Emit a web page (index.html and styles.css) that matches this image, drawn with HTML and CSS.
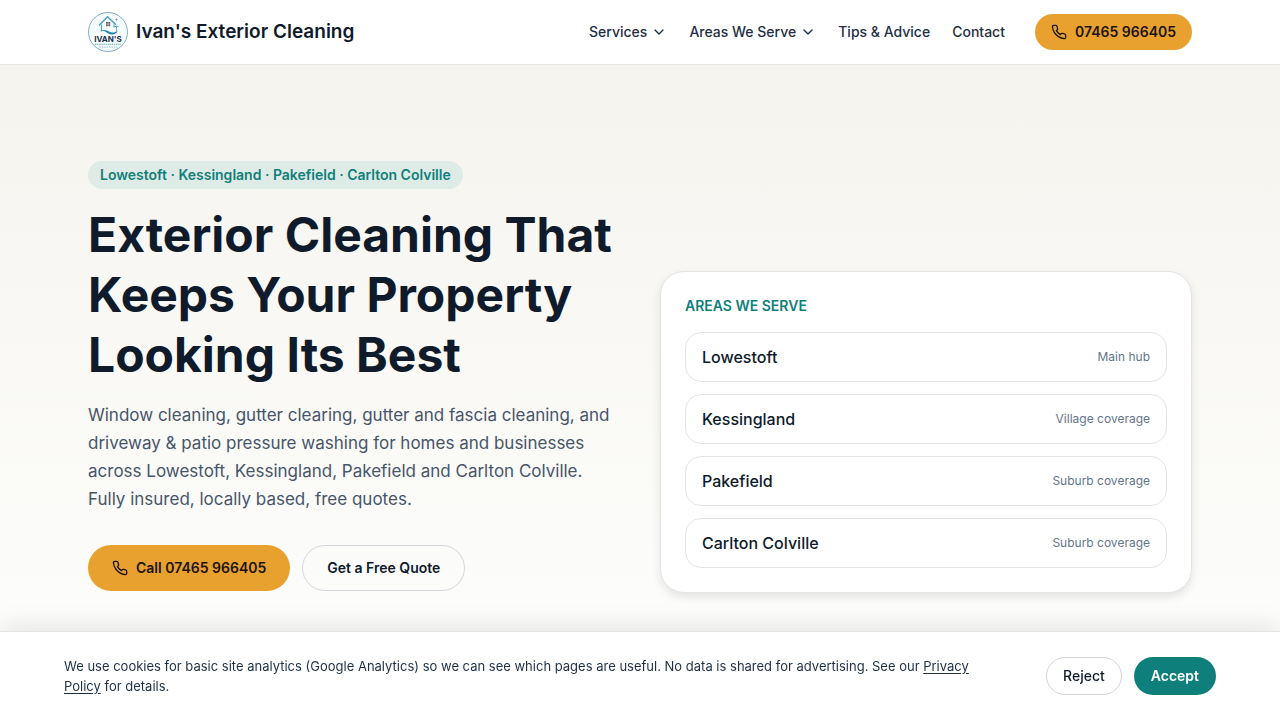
FILE: index.html
```html
<!DOCTYPE html>
<html lang="en-GB">
<head>
    <meta charset="UTF-8">
    <meta name="viewport" content="width=device-width, initial-scale=1.0">
    <title>Ivan's Exterior Cleaning</title>
    <link rel="stylesheet" href="styles.css">
</head>
<body>
    <header class="site-header">
        <div class="container header-inner">
            <a href="#" class="brand">
                <svg class="logo" viewBox="0 0 40 40" aria-hidden="true">
                    <circle cx="20" cy="20" r="19.5" fill="#f7fcfe" stroke="#5f9dbd" stroke-width=".8"/>
                    <path d="M11 13.500 19.500 4.800l8.500 8" fill="none" stroke="#4d9fc6" stroke-width="1.500"/>
                    <path d="M13.500 12.500v7M26 12.500v3" fill="none" stroke="#4d9fc6" stroke-width="1.100"/>
                    <path d="M18 10h4.200v4.200H18z" fill="#685f63"/>
                    <path d="M20.100 10v4.200M18 12.100h4.200" stroke="#d9edf5" stroke-width=".5"/>
                    <path d="M11.500 19c4-2 7-1 9.500.5s6 1.500 9-1c-1.500 4.500-7 5-10.500 2.500s-5-2.500-8-2z" fill="#2382b8"/>
                    <path d="M28.500 6.500v2M27.500 7.500h2M28.500 13.500v6M26.500 14.500h4" fill="none" stroke="#55a8c8" stroke-width=".9"/>
                    <text class="logo-name" x="20" y="30" text-anchor="middle">IVAN'S</text>
                    <path d="M7 32.300h26" stroke="#6eaeb9" stroke-width="1" stroke-dasharray="1.500 .6"/>
                    <path d="M11.500 35.200h18" stroke="#9ccbd8" stroke-width="1.200" stroke-dasharray="1.400 1"/>
                </svg>
                <span>Ivan's Exterior Cleaning</span>
            </a>
            <nav class="main-nav" aria-label="Main">
                <button type="button" class="nav-item">Services
                    <svg class="chevron" viewBox="0 0 24 24" aria-hidden="true"><path d="m6 9 6 6 6-6"/></svg>
                </button>
                <button type="button" class="nav-item">Areas We Serve
                    <svg class="chevron" viewBox="0 0 24 24" aria-hidden="true"><path d="m6 9 6 6 6-6"/></svg>
                </button>
                <a href="#" class="nav-item">Tips &amp; Advice</a>
                <a href="#" class="nav-item">Contact</a>
                <a href="tel:07465966405" class="button button-amber button-small">
                    <svg class="phone" viewBox="0 0 24 24" aria-hidden="true"><path d="M22 16.920v3a2 2 0 0 1-2.180 2 19.790 19.790 0 0 1-8.630-3.070 19.500 19.500 0 0 1-6-6 19.790 19.790 0 0 1-3.070-8.670A2 2 0 0 1 4.110 2h3a2 2 0 0 1 2 1.720 12.840 12.840 0 0 0 .7 2.810 2 2 0 0 1-.45 2.110L8.090 9.910a16 16 0 0 0 6 6l1.270-1.270a2 2 0 0 1 2.110-.45 12.840 12.840 0 0 0 2.810.7A2 2 0 0 1 22 16.920z"/></svg>
                    07465 966405
                </a>
            </nav>
        </div>
    </header>

    <main class="hero">
        <div class="container hero-grid">
            <!-- Intro -->
            <section class="hero-copy">
                <p class="badge">Lowestoft · Kessingland · Pakefield · Carlton Colville</p>
                <h1>Exterior Cleaning That Keeps Your Property Looking Its Best</h1>
                <p class="lead">Window cleaning, gutter clearing, gutter and fascia cleaning, and driveway &amp; patio pressure washing for homes and businesses across Lowestoft, Kessingland, Pakefield and Carlton Colville. Fully insured, locally based, free quotes.</p>
                <div class="actions">
                    <a href="tel:07465966405" class="button button-amber">
                        <svg class="phone" viewBox="0 0 24 24" aria-hidden="true"><path d="M22 16.920v3a2 2 0 0 1-2.180 2 19.790 19.790 0 0 1-8.630-3.070 19.500 19.500 0 0 1-6-6 19.790 19.790 0 0 1-3.070-8.670A2 2 0 0 1 4.110 2h3a2 2 0 0 1 2 1.720 12.840 12.840 0 0 0 .7 2.810 2 2 0 0 1-.45 2.110L8.090 9.910a16 16 0 0 0 6 6l1.270-1.270a2 2 0 0 1 2.110-.45 12.840 12.840 0 0 0 2.810.7A2 2 0 0 1 22 16.920z"/></svg>
                        Call 07465 966405
                    </a>
                    <a href="#" class="button button-outline">Get a Free Quote</a>
                </div>
            </section>

            <!-- Areas -->
            <section class="areas-card">
                <h2>Areas we serve</h2>
                <ul class="areas">
                    <li><a href="#"><span class="area-name">Lowestoft</span><span class="area-note">Main hub</span></a></li>
                    <li><a href="#"><span class="area-name">Kessingland</span><span class="area-note">Village coverage</span></a></li>
                    <li><a href="#"><span class="area-name">Pakefield</span><span class="area-note">Suburb coverage</span></a></li>
                    <li><a href="#"><span class="area-name">Carlton Colville</span><span class="area-note">Suburb coverage</span></a></li>
                </ul>
            </section>
        </div>
    </main>

    <div class="cookie-banner" role="region" aria-label="Cookie consent">
        <div class="cookie-inner">
            <p>We use cookies for basic site analytics (Google Analytics) so we can see which pages are useful. No data is shared for advertising. See our <a href="#">Privacy Policy</a> for details.</p>
            <div class="cookie-actions">
                <button type="button" class="button button-outline button-cookie">Reject</button>
                <button type="button" class="button button-teal button-cookie">Accept</button>
            </div>
        </div>
    </div>
</body>
</html>
```
FILE: styles.css
```css
* {
    box-sizing: border-box;
}

body {
    margin: 0;
    font-family: Inter, "Liberation Sans", sans-serif;
    font-size: 16px;
    line-height: 24px;
    color: #0f1a2b;
    background-color: #fff;
}

h1, h2, p, ul {
    margin: 0;
    padding: 0;
}

a {
    color: inherit;
    text-decoration: none;
}

button {
    font-family: inherit;
    cursor: pointer;
}

svg {
    flex-shrink: 0;
}

.container {
    width: 100%;
    max-width: 1152px;
    margin: 0 auto;
    padding: 0 24px;
}

/* Header */
.site-header {
    position: sticky;
    top: 0;
    z-index: 10;
    background-color: #fff;
    border-bottom: 1px solid #e7e5e4;
}

.header-inner {
    display: flex;
    align-items: center;
    justify-content: space-between;
    min-height: 64px;
}

.brand {
    display: flex;
    align-items: center;
    gap: 8px;
    font-size: 19px;
    font-weight: 600;
}

.logo {
    width: 40px;
    height: 40px;
}

.logo-name {
    font-size: 8px;
    font-weight: 700;
    fill: #173149;
}

.main-nav {
    display: flex;
    align-items: center;
    gap: 22px;
}

.nav-item {
    display: flex;
    align-items: center;
    gap: 4px;
    padding: 0;
    border: 0;
    background: none;
    font-size: 14px;
    font-weight: 500;
    line-height: 20px;
    color: #1e2f45;
}

.chevron,
.phone {
    width: 16px;
    height: 16px;
    fill: none;
    stroke: currentColor;
    stroke-width: 2;
    stroke-linecap: round;
    stroke-linejoin: round;
}

/* Buttons */
.button {
    display: inline-flex;
    align-items: center;
    justify-content: center;
    gap: 8px;
    padding: 12px 24px;
    border: 1px solid transparent;
    border-radius: 999px;
    font-size: 14px;
    font-weight: 600;
    line-height: 20px;
    white-space: nowrap;
}

.button-amber {
    border: 0;
    padding: 13px 24px;
    background-color: #e8a12f;
    color: #1c1410;
}

.button-small {
    margin-left: 8px;
    padding: 8px 16px;
}

.button-outline {
    border-color: #d2d5d9;
    color: #0f1a2b;
}

.button-teal {
    background-color: #0f7f7b;
    color: #fff;
}

.button-cookie {
    padding: 8px 16px;
}

.button-cookie.button-outline {
    background-color: #fff;
    font-weight: 500;
}

/* Hero */
.hero {
    padding: 96px 0 16px;
    background: linear-gradient(to bottom, #f5f4ef, #fefefd);
}

.hero-grid {
    display: grid;
    grid-template-columns: 1fr 1fr;
    gap: 40px;
    align-items: center;
}

/* leaves room for the fixed banner below */
.hero-copy {
    padding-bottom: 112px;
}

.badge {
    display: inline-block;
    padding: 4px 12px;
    border-radius: 999px;
    background-color: #dfebe6;
    color: #0f7f7b;
    font-size: 14px;
    font-weight: 600;
    line-height: 20px;
}

.hero h1 {
    margin-top: 16px;
    font-size: 48px;
    font-weight: 700;
    line-height: 60px;
}

.lead {
    margin-top: 16px;
    font-size: 17px;
    line-height: 28px;
    color: #475569;
}

.actions {
    display: flex;
    flex-wrap: wrap;
    gap: 12px;
    margin-top: 32px;
}

.areas-card {
    padding: 24px;
    border: 1px solid #e7e5e4;
    border-radius: 24px;
    background-color: #fff;
    box-shadow: 0 4px 10px rgba(0, 0, 0, 0.1);
}

.areas-card h2 {
    font-size: 14px;
    font-weight: 600;
    line-height: 20px;
    text-transform: uppercase;
    color: #0f7f7b;
}

.areas {
    display: grid;
    gap: 12px;
    margin-top: 16px;
    list-style: none;
}

.areas a {
    display: flex;
    align-items: center;
    justify-content: space-between;
    padding: 12px 16px;
    border: 1px solid #e7e5e4;
    border-radius: 16px;
}

.area-name {
    font-weight: 500;
}

.area-note {
    font-size: 12px;
    line-height: 16px;
    color: #64748b;
}

/* Cookie banner */
.cookie-banner {
    position: fixed;
    right: 0;
    bottom: 0;
    left: 0;
    z-index: 20;
    padding: 24px;
    border-top: 1px solid #e7e5e4;
    background-color: #fff;
    box-shadow: 0 -4px 24px rgba(0, 0, 0, 0.1);
}

.cookie-inner {
    display: flex;
    align-items: center;
    justify-content: space-between;
    gap: 48px;
    max-width: 1152px;
    margin: 0 auto;
}

.cookie-inner p {
    font-size: 13px;
    line-height: 20px;
    color: #1e2f45;
}

.cookie-inner p a {
    text-decoration: underline;
    text-underline-offset: 2px;
}

.cookie-actions {
    display: flex;
    flex-shrink: 0;
    gap: 12px;
}

@media (max-width: 768px) {
    .header-inner,
    .main-nav,
    .cookie-inner {
        flex-wrap: wrap;
    }

    .hero {
        padding: 48px 0 160px;
    }

    .hero-grid {
        grid-template-columns: 1fr;
    }

    .hero-copy {
        padding-bottom: 0;
    }

    .hero h1 {
        font-size: 36px;
        line-height: 44px;
    }
}
```
